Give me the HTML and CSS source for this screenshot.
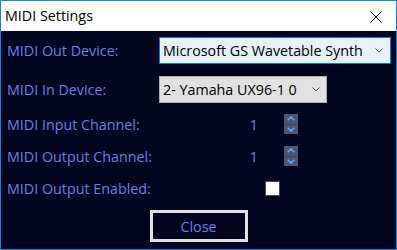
FILE: index.html
```html
<!DOCTYPE html>
<html>
<head>
<meta charset="utf-8">
<title>MIDI Settings</title>
<link rel="stylesheet" href="styles.css">
</head>
<body>
<div class="window">
  <div class="titlebar">
    <span class="title">MIDI Settings</span>
    <svg class="close-x" width="12" height="12" viewBox="0 0 12 12"><path d="M0.5 0.5 L11.5 11.5 M11.5 0.5 L0.5 11.5" stroke="#000" stroke-width="1" fill="none"/></svg>
  </div>
  <div class="content">
    <div class="row row-combo">
      <span class="label">MIDI Out Device:</span>
      <div class="combo combo-focus combo-wide">
        <span class="combo-text">Microsoft GS Wavetable Synth</span>
        <svg class="chev" width="8" height="5" viewBox="0 0 8 5"><path d="M0.5 0.5 L4 4 L7.5 0.5" stroke="#555" stroke-width="1" fill="none"/></svg>
      </div>
    </div>
    <div class="row row-combo row-combo2">
      <span class="label">MIDI In Device:</span>
      <div class="combo combo-plain combo-narrow">
        <span class="combo-text">2- Yamaha UX96-1 0</span>
        <svg class="chev" width="8" height="5" viewBox="0 0 8 5"><path d="M0.5 0.5 L4 4 L7.5 0.5" stroke="#555" stroke-width="1" fill="none"/></svg>
      </div>
    </div>
    <div class="row row-num">
      <span class="label">MIDI Input Channel:</span>
      <div class="numeric">
        <span class="num-val">1</span>
        <div class="spin">
          <div class="spin-half"><svg width="8" height="5" viewBox="0 0 8 5"><path d="M0.8 4.2 L4 1 L7.2 4.2" stroke="#5ab0f2" stroke-width="1.6" fill="none"/></svg></div>
          <div class="spin-half"><svg width="8" height="5" viewBox="0 0 8 5"><path d="M0.8 0.8 L4 4 L7.2 0.8" stroke="#5ab0f2" stroke-width="1.6" fill="none"/></svg></div>
        </div>
      </div>
    </div>
    <div class="row row-num">
      <span class="label">MIDI Output Channel:</span>
      <div class="numeric">
        <span class="num-val">1</span>
        <div class="spin">
          <div class="spin-half"><svg width="8" height="5" viewBox="0 0 8 5"><path d="M0.8 4.2 L4 1 L7.2 4.2" stroke="#5ab0f2" stroke-width="1.6" fill="none"/></svg></div>
          <div class="spin-half"><svg width="8" height="5" viewBox="0 0 8 5"><path d="M0.8 0.8 L4 4 L7.2 0.8" stroke="#5ab0f2" stroke-width="1.6" fill="none"/></svg></div>
        </div>
      </div>
    </div>
    <div class="row row-check">
      <span class="label">MIDI Output Enabled:</span>
      <span class="checkbox"></span>
    </div>
    <div class="button-row">
      <div class="btn">Close</div>
    </div>
  </div>
</div>
</body>
</html>
```
FILE: styles.css
```css
html, body {
  margin: 0;
  padding: 0;
  background: #ffffff;
}
body {
  font-family: "Open Sans", "Noto Sans", sans-serif;
  font-size: 14.3px;
}
.window {
  width: 397px;
  height: 250px;
  box-sizing: border-box;
  border: 1px solid #1883d7;
  display: flex;
  flex-direction: column;
  overflow: hidden;
}
.titlebar {
  height: 30px;
  flex: 0 0 30px;
  background: #ffffff;
  display: flex;
  align-items: center;
  justify-content: space-between;
  padding-left: 4px;
  padding-right: 14px;
  line-height: 30px;
  color: #000;
}
.title {
  font-size: 14.3px;
}
.close-x {
  display: block;
  margin-top: 2px;
}
.content {
  flex: 1;
  background: #020520;
  padding: 6px 0 0 6px;
  display: flex;
  flex-direction: column;
}
.row {
  display: grid;
  grid-template-columns: 152px auto;
  align-items: center;
}
.label {
  color: #6c7ee4;
  white-space: nowrap;
}
.row-combo {
  height: 27px;
}
.row-combo2 {
  margin-top: 12px;
  height: 27px;
}
.row-num {
  height: 20px;
  margin-top: 11px;
}
.row-num + .row-num {
  margin-top: 12px;
}
.row-check {
  height: 20px;
  margin-top: 12px;
}
.combo {
  box-sizing: border-box;
  height: 27px;
  display: flex;
  align-items: center;
  justify-content: space-between;
  padding-left: 3px;
  color: #000;
  white-space: nowrap;
}
.combo-focus {
  background: #e5f1fb;
  border: 1px solid #0078d7;
}
.combo-plain {
  background: #e1e1e1;
  border: 1px solid #adadad;
}
.combo-wide {
  width: 232px;
  padding-right: 7px;
}
.combo-narrow {
  width: 168px;
  padding-right: 6px;
}
.chev {
  display: block;
}
.numeric {
  display: flex;
  align-items: center;
  height: 20px;
}
.num-val {
  width: 99px;
  text-align: right;
  color: #6c7ee4;
}
.spin {
  margin-left: 26px;
  width: 14px;
  height: 20px;
  background: #4b5572;
  display: flex;
  flex-direction: column;
}
.spin-half {
  flex: 1;
  display: flex;
  align-items: center;
  justify-content: center;
}
.spin-half + .spin-half {
  border-top: 1px solid #3b4360;
}
.spin svg {
  display: block;
}
.checkbox {
  display: block;
  margin-left: 106px;
  width: 13px;
  height: 13px;
  background: #ffffff;
  border: 1px solid #4a4a4a;
}
.button-row {
  margin-top: 12px;
  margin-left: -6px;
  display: flex;
  justify-content: center;
}
.btn {
  box-sizing: border-box;
  width: 98px;
  height: 32px;
  border: 3px solid #e1e1e1;
  background: #020520;
  color: #6c7ee4;
  display: flex;
  align-items: center;
  justify-content: center;
}
```
